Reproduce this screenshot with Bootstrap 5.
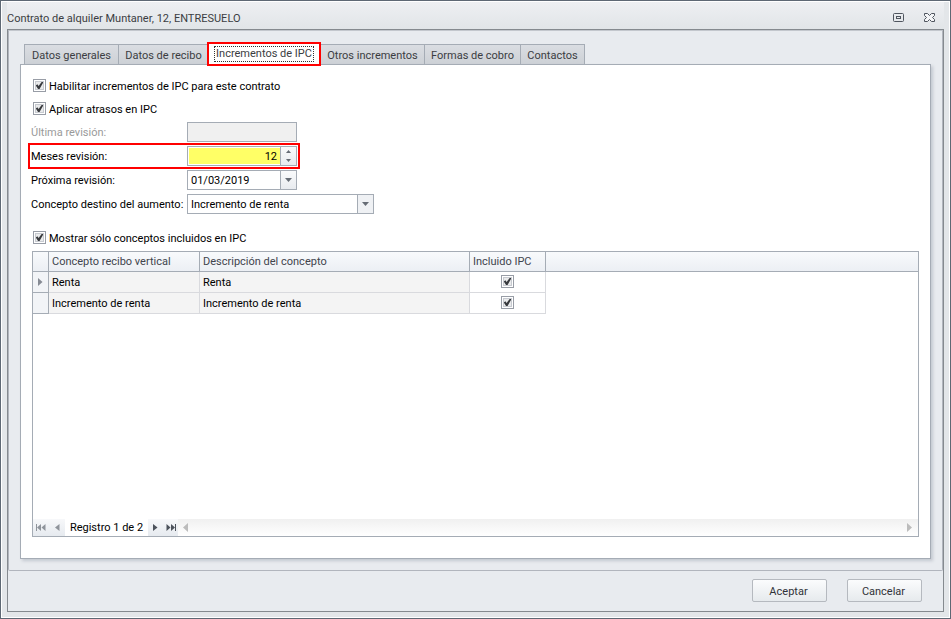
<!DOCTYPE html>
<html lang="es">
<head>
<meta charset="utf-8">
<meta name="viewport" content="width=device-width, initial-scale=1">
<title>Contrato de alquiler</title>
<link href="https://cdn.jsdelivr.net/npm/bootstrap@5.3.0/dist/css/bootstrap.min.css" rel="stylesheet">
<style>
:root { --edge: #a5acb5; --ink: #3b3d42; }
body { font: 11px/14px Tahoma, Roboto, sans-serif; color: #000; background: #e8ebef; }
button, input, select { font: inherit; color: inherit; }
.win { border: 1px solid #5e6874; background: #e3e6e9; box-shadow: inset 0 0 0 1px #fff; padding: 1px 6px 6px; }
.title-bar { height: 27px; color: var(--ink); background: linear-gradient(#eeeff2, #e1e5e8); padding: 5px 8px 0 0; }
.title-bar h1 { font-size: 11px; line-height: 16px; font-weight: 400; }
.title-bar button { border: 0; background: none; padding: 0; line-height: 0; }
.frame { border: 1px solid #858a8f; background: #e8ebef; }
.client { border: 1px solid #b1b5bd; border-top-color: #c3c7cd; padding: 13px 11px 11px; border-radius: 0 0 2px 2px; }
.tabs { padding-left: 4px; margin-bottom: -1px; }
.tab-btn { height: 21px; padding: 2px 0 0; border: 1px solid var(--edge); background: linear-gradient(#dadde2, #cdd1d6); color: var(--ink); white-space: nowrap; margin-right: -1px; }
.tab-btn.active { position: relative; height: 24px; margin: -2px -1px -1px -1px; border: 2px solid #f00; background: #fff; padding: 0; }
.tab-btn.active span { outline: 1px dotted #333; display: inline-block; line-height: 14px; padding: 0 1px; }
.w-gen { width: 95px; } .w-rec { width: 91px; } .w-ipc { width: 114px; } .w-otr { width: 105px; } .w-for { width: 97px; } .w-con { width: 65px; }
.sheet { border: 1px solid var(--edge); background: #fff; box-shadow: 2px 2px 3px #c3c8d0; padding: 14px 11px 21px 10px; }
.tick { appearance: none; width: 13px; height: 13px; margin: 0; flex: none; border: 1px solid #989da6; background: #e9eaeb; box-shadow: inset 0 0 0 1px #fff, inset 0 0 0 2px #c7cad0; }
.tick:checked { background: #e9eaeb url("data:image/svg+xml,%3Csvg xmlns='http://www.w3.org/2000/svg' width='11' height='11'%3E%3Cpath d='M1.8 5.5 3.4 4.3 4.6 6 8 1.5 9.8 1.5 5.4 9.3 4.2 9.3Z' fill='%23383a3e'/%3E%3C/svg%3E") center no-repeat; }
.tick-row { gap: 3px; padding-left: 2px; height: 13px; }
.tick-row label { padding-top: 3px; }
.tick-row + .tick-row { margin-top: 10px; }
.fields { gap: 4px; margin: 7px 0 17px; }
.field-row { width: 266px; height: 20px; }
.field-row.wide { width: 343px; }
.field-row label { width: 156px; flex: none; white-space: nowrap; padding-top: 2px; }
.field-row label.dim { color: #9a9a9a; }
.field-row.marked { outline: 2px solid #f00; outline-offset: 1px; }
.box { border: 1px solid var(--edge); background: #fff; height: 20px; min-width: 0; }
.box input { border: 0; padding: 2px 3px 0; min-width: 0; background: none; outline: 0; }
.box input.hot { background: #ff6; margin: 1px 0 1px 1px; }
.box button, .spin { width: 16px; flex: none; border: 0; border-left: 1px solid var(--edge); background: linear-gradient(#fafbfc, #e8ebef); padding: 0; line-height: 0; }
.spin button { width: 15px; height: 9px; border: 0; background: none; }
input.off { background: #f0f0f0; border: 1px solid var(--edge); height: 20px; min-width: 0; }
select.box { appearance: none; padding: 2px 18px 0 3px; border-radius: 0; background: url("data:image/svg+xml,%3Csvg xmlns='http://www.w3.org/2000/svg' width='16' height='18'%3E%3Cpath fill='%23eff1f4' d='M0 0h16v18H0z'/%3E%3Cpath fill='%23a5acb5' d='M0 0h1v18H0z'/%3E%3Cpath fill='%23666c75' d='M5 7h7L8.5 11z'/%3E%3C/svg%3E") right center no-repeat #fff; }
.data-box { border: 1px solid var(--edge); margin: 7px 0 0 1px; }
.data { width: 100%; table-layout: fixed; border-collapse: separate; border-spacing: 0; }
.data th { height: 20px; font-weight: 400; color: #41444d; background: linear-gradient(#f8fafc, #eceff4); border: solid var(--edge); border-width: 0 1px 1px 0; padding: 0 3px; white-space: nowrap; }
.data th:last-child { border-right: 0; }
.data td { height: 21px; background: #f4f4f4; border: solid #d9dade; border-width: 0 1px 1px 0; padding: 2px 3px 0; vertical-align: middle; }
.data td.mark-cell { background: #f2f4f7; border-color: var(--edge); padding: 0; line-height: 0; }
.data td.tick-cell { background: #fff; line-height: 0; text-align: center; padding: 0 0 1px; }
.data td.blank { background: none; border: 0; }
.c-mark { width: 16px; } .c-name { width: 151px; } .c-desc { width: 270px; } .c-ipc { width: 76px; }
.pager { height: 17px; }
.pager button { border: 0; padding: 0; width: 15px; height: 17px; line-height: 0; background: linear-gradient(#f7f8fa, #e6eaef); color: #4d535c; flex: none; }
.pager button:disabled { width: 16px; color: #8f949b; }
.pager span { width: 83px; text-align: center; white-space: nowrap; padding-top: 1px; }
.pager .track { background: linear-gradient(#f0f0f0, #fff); color: #bcbcbc; line-height: 0; padding: 0 5px; }
svg { fill: currentColor; }
.actions { gap: 20px; padding: 8px 21px 9px 0; }
.cmd { width: 75px; height: 23px; padding: 2px 2px 0 0; border: 1px solid #b5b9bf; border-radius: 2px; background: linear-gradient(#fbfcfd, #e6eaed); color: #303238; }
</style>
<script src="https://cdn.jsdelivr.net/npm/bootstrap@5.3.0/dist/js/bootstrap.bundle.min.js"></script>
</head>
<body>
<div class="win d-flex flex-column min-vh-100">
  <header class="title-bar d-flex justify-content-between">
    <h1 class="m-0 pt-1">Contrato de alquiler Muntaner, 12, ENTRESUELO</h1>
    <div class="d-flex gap-3 align-items-start pt-1">
      <button type="button" aria-label="Maximizar"><svg width="15" height="13"><g fill="none" stroke="#4f555e"><rect x="1.500" y="2.500" width="10" height="8" rx="1"/><rect x="4.500" y="5.500" width="4" height="2"/></g></svg></button>
      <button type="button" aria-label="Cerrar"><svg width="13" height="13"><path d="M1.500 2.500h3l2 2 2-2h3v2l-2 2 2 2v2h-3l-2-2-2 2h-3v-2l2-2-2-2z" fill="#f4f5f7" stroke="#4f555e"/></svg></button>
    </div>
  </header>
  <div class="frame d-flex flex-column flex-fill">
    <main class="client d-flex flex-column flex-fill">
      <nav class="tabs d-flex" role="tablist">
        <button type="button" role="tab" class="tab-btn w-gen">Datos generales</button>
        <button type="button" role="tab" class="tab-btn w-rec">Datos de recibo</button>
        <button type="button" role="tab" class="tab-btn w-ipc active" aria-selected="true"><span>Incrementos de IPC</span></button>
        <button type="button" role="tab" class="tab-btn w-otr">Otros incrementos</button>
        <button type="button" role="tab" class="tab-btn w-for">Formas de cobro</button>
        <button type="button" role="tab" class="tab-btn w-con">Contactos</button>
      </nav>
      <form class="sheet d-flex flex-column flex-fill">
        <div class="tick-row d-flex align-items-center"><input class="tick" type="checkbox" id="hab" checked><label for="hab">Habilitar incrementos de IPC para este contrato</label></div>
        <div class="tick-row d-flex align-items-center"><input class="tick" type="checkbox" id="atr" checked><label for="atr">Aplicar atrasos en IPC</label></div>
        <div class="fields d-flex flex-column">
          <div class="field-row d-flex align-items-center"><label for="ult" class="dim">Última revisión:</label><input class="off flex-fill" id="ult" type="text" disabled></div>
          <div class="field-row marked d-flex align-items-center"><label for="mes">Meses revisión:</label>
            <div class="box d-flex flex-fill"><input class="hot text-end flex-fill" id="mes" type="text" value="12"><div class="spin d-flex flex-column"><button type="button" aria-label="Más"><svg width="5" height="3"><path d="M0 3h5L2.500 0z" fill="#666c75"/></svg></button><button type="button" aria-label="Menos"><svg width="5" height="3"><path d="M0 0h5L2.500 3z" fill="#666c75"/></svg></button></div></div></div>
          <div class="field-row d-flex align-items-center"><label for="prox">Próxima revisión:</label>
            <div class="box d-flex flex-fill"><input class="flex-fill" id="prox" type="text" value="01/03/2019"><button type="button" aria-label="Abrir calendario"><svg width="7" height="4"><path d="M0 0h7L3.500 4z" fill="#666c75"/></svg></button></div></div>
          <div class="field-row wide d-flex align-items-center"><label for="dest">Concepto destino del aumento:</label><select class="box flex-fill" id="dest"><option>Incremento de renta</option></select></div>
        </div>
        <div class="tick-row d-flex align-items-center"><input class="tick" type="checkbox" id="solo" checked><label for="solo">Mostrar sólo conceptos incluidos en IPC</label></div>
        <div class="data-box d-flex flex-column flex-fill">
          <table class="data">
            <colgroup><col class="c-mark"><col class="c-name"><col class="c-desc"><col class="c-ipc"><col></colgroup>
            <thead><tr><th></th><th>Concepto recibo vertical</th><th>Descripción del concepto</th><th>Incluido IPC</th><th></th></tr></thead>
            <tbody>
              <tr><td class="mark-cell text-center"><svg width="5" height="8"><path d="M0 0v8l4.500-4z" fill="#868b94"/></svg></td><td>Renta</td><td>Renta</td><td class="tick-cell"><input class="tick" type="checkbox" aria-label="Renta incluido" checked></td><td class="blank"></td></tr>
              <tr><td class="mark-cell"></td><td>Incremento de renta</td><td>Incremento de renta</td><td class="tick-cell"><input class="tick" type="checkbox" aria-label="Incremento de renta incluido" checked></td><td class="blank"></td></tr>
            </tbody>
          </table>
          <div class="pager d-flex align-items-center mt-auto">
            <button type="button" disabled aria-label="Primero"><svg width="10" height="7"><path d="M0 0h1v7H0zM5 0v7L1 3.500zM9.500 0v7L5.500 3.500z"/></svg></button>
            <button type="button" disabled aria-label="Anterior"><svg width="5" height="7"><path d="M4.500 0v7L0 3.500z"/></svg></button>
            <span>Registro 1 de 2</span>
            <button type="button" aria-label="Siguiente"><svg width="5" height="7"><path d="M0 0v7l4.500-3.500z"/></svg></button>
            <button type="button" aria-label="Último"><svg width="10" height="7"><path d="M9 0h1v7H9zM5 0v7l4-3.500zM.5 0v7l4-3.500z"/></svg></button>
            <div class="track d-flex flex-fill h-100 align-items-center justify-content-between"><svg width="6" height="9"><path d="M5 0v9L0 4.500z"/></svg><svg width="6" height="9"><path d="M0 0v9l5-4.500z"/></svg></div>
          </div>
        </div>
      </form>
    </main>
    <footer class="actions d-flex justify-content-end">
      <button type="button" class="cmd">Aceptar</button>
      <button type="button" class="cmd">Cancelar</button>
    </footer>
  </div>
</div>
</body>
</html>
